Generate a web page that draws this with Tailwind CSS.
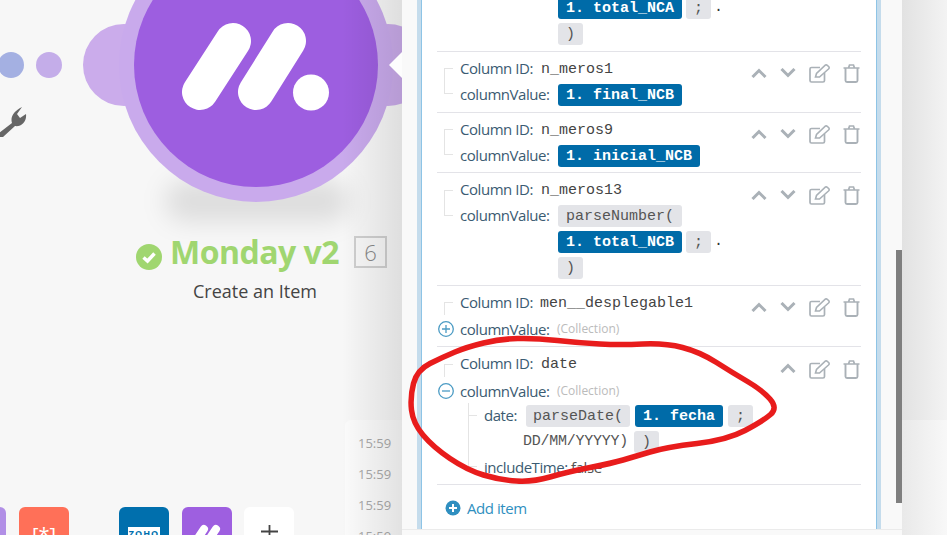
<!DOCTYPE html>
<html lang="en">
<head>
    <meta charset="UTF-8">
    <title>Monday v2</title>
    <script src="https://cdn.jsdelivr.net/npm/@tailwindcss/browser@4"></script>
</head>
<body class="w-[947px] h-[535px] overflow-hidden bg-[#f7f7f7] font-['Open_Sans',sans-serif]">
<div class="relative flex w-[947px] h-[535px] overflow-hidden">

    <!-- Scenario canvas -->
    <div class="relative w-[402px] h-[535px] shrink-0 overflow-hidden bg-[#f7f7f7]">
        <div class="absolute left-[-2px] top-[52px] w-[26px] h-[26px] rounded-full bg-[#a4b0e2]"></div>
        <div class="absolute left-[36px] top-[52px] w-[26px] h-[26px] rounded-full bg-[#c4ade9]"></div>
        <!-- wrench -->
        <svg class="absolute left-[-4px] top-[105px]" width="32" height="32" viewBox="0 0 32 32">
            <path d="M3 28 L16 18 C14 12 18 6 26 2 L21 9 L24 13 L30 9 C31 17 25 22 19 21 L7 32 L3 32 Z" fill="#666"/>
        </svg>
        <!-- module bubble -->
        <div class="absolute left-[165px] top-[180px] w-[185px] h-[42px] rounded-full bg-black/10 blur-[12px]"></div>
        <div class="absolute left-[83px] top-[24px] w-[82px] h-[82px] rounded-full bg-[#cbaceb]"></div>
        <div class="absolute left-[347px] top-[24px] w-[82px] h-[82px] rounded-full bg-[#cbaceb]"></div>
        <div class="absolute left-[119px] top-[-72px] w-[274px] h-[274px] rounded-full bg-[#c9aaec]"></div>
        <div class="absolute left-[134px] top-[-57px] w-[244px] h-[244px] rounded-full bg-[#9d5ee0]"></div>
        <svg class="absolute left-[119px] top-[0px]" width="274" height="130" viewBox="119 0 274 130">
            <path d="M233 41 L200 92 M288 41 L256 92" stroke="#fff" stroke-width="36" stroke-linecap="round" fill="none"/>
            <circle cx="311" cy="92.500" r="18" fill="#fff"/>
        </svg>
        <!-- module label -->
        <div class="absolute left-[136px] top-[233px] flex items-center h-[38px]">
            <svg class="mt-[9px] mr-[8px]" width="26" height="26" viewBox="0 0 26 26">
                <circle cx="13" cy="13" r="13" fill="#a0d670"/>
                <path d="M7.500 13.500 L11.500 17 L18.500 9.500" stroke="#fff" stroke-width="3.500" fill="none"/>
            </svg>
            <span class="text-[32px] leading-[38px] font-bold text-[#a0d670] tracking-[-0.5px]">Monday v2</span>
            <span class="ml-[15px] flex items-center justify-center w-[33px] h-[32px] border-2 border-[#cfcfcf] text-[22px] font-light text-[#888]">6</span>
        </div>
        <div class="absolute left-[193px] top-[278px] text-[18px] leading-[26px] text-[#444]">Create an Item</div>
        <!-- toolbar tiles -->
        <div class="absolute left-[-44px] top-[507px] w-[50px] h-[50px] rounded-[6px] bg-[#b18fe6]"></div>
        <div class="absolute left-[19px] top-[507px] w-[50px] h-[50px] rounded-[6px] bg-[#ff7058] flex justify-center pt-[17px] text-[20px] leading-[22px] text-white">[*]</div>
        <div class="absolute left-[119px] top-[507px] w-[50px] h-[50px] rounded-[6px] bg-[#006fad] flex justify-center pt-[20px]">
            <span class="bg-white h-[14px] px-[1px] text-[9px] leading-[13px] font-bold text-[#006fad] tracking-[1px]">ZOHO</span>
        </div>
        <div class="absolute left-[182px] top-[507px] w-[50px] h-[50px] rounded-[6px] bg-[#9e5fe0] overflow-hidden">
            <svg width="50" height="50" viewBox="0 0 50 50">
                <path d="M22 22 L10 40 M34 22 L22 40" stroke="#fff" stroke-width="8" stroke-linecap="round" fill="none"/>
            </svg>
        </div>
        <div class="absolute left-[244px] top-[507px] w-[50px] h-[50px] rounded-[6px] bg-white">
            <svg class="ml-[17px] mt-[18px]" width="17" height="17" viewBox="0 0 17 17"><path d="M0 6.500 H17 M8.500 0 V17" stroke="#444" stroke-width="1.800"/></svg>
        </div>
        <!-- log -->
        <div class="absolute left-[345px] top-[420px] w-[57px] h-[115px] rounded-tl-[6px] bg-[#fbfbfb] pl-[13px] pt-[8px] text-[13px] leading-[31px] text-[#aaa]">
            <div>15:59</div>
            <div>15:59</div>
            <div>15:59</div>
            <div>15:59</div>
        </div>
        <!-- panel shadow -->
        <div class="absolute right-0 top-0 w-[60px] h-[535px] bg-gradient-to-r from-black/0 to-black/10"></div>
        <svg class="absolute left-[388px] top-[52px]" width="14" height="26" viewBox="0 0 14 26">
            <path d="M14 0 L1 13 L14 26 Z" fill="#fdfdfd"/>
        </svg>
    </div>

    <!-- Mapper panel -->
    <div class="w-[500px] h-[535px] shrink-0 bg-[#f9f9f9] relative overflow-hidden">
        <div class="ml-[15px] w-[464px] h-[529px] bg-[#c5dcec] px-[4px] overflow-hidden">
            <div class="h-[529px] bg-white border-x border-[#8ec4e6] overflow-hidden">
            <div class="ml-[15px] w-[424px] mt-[-3px]">
                <!-- cut off row -->
                <div class="h-[55px] pl-[121px] border-b border-[#e3e3e8] font-['Liberation_Mono',monospace] text-[15px]">
                    <div class="flex gap-[4px] items-center h-[22px] mb-[4px]">
                        <span class="h-[22px] leading-[23px] px-[8px] rounded-[3px] bg-[#006ba8] text-white font-bold">1. total_NCA</span>
                        <span class="h-[22px] leading-[23px] px-[8px] rounded-[3px] bg-[#e3e4e8] text-[#555]">;</span>
                        <span class="text-[#333] ml-[-1px]">.</span>
                    </div>
                    <span class="inline-block h-[22px] leading-[23px] px-[8px] rounded-[3px] bg-[#e3e4e8] text-[#555]">)</span>
                </div>

                <!-- n_meros1 -->
                <div class="flex h-[61px] border-b border-[#e3e3e8]">
                    <div class="ml-[7px] mt-[16px] w-[9px] shrink-0">
                        <div class="h-[13px] border-l border-t border-[#e4e4e4]"></div>
                        <div class="h-[13px] border-l border-b border-[#e4e4e4]"></div>
                    </div>
                    <div class="ml-[7px] w-[291px] shrink-0 pt-[6px] text-[15px] tracking-[-0.45px] leading-[20px] text-[#3b5b72]">
                        <div class="h-[24px] flex"><span class="w-[81px]">Column ID:</span><span class="font-['Liberation_Mono',monospace] tracking-normal leading-[24px] text-[#444]">n_meros1</span></div>
                        <div class="flex items-center h-[26px]"><span class="w-[98px] pb-[2px]">columnValue:</span><span class="h-[22px] leading-[23px] px-[8px] rounded-[3px] bg-[#006ba8] text-white font-bold tracking-normal font-['Liberation_Mono',monospace]">1. final_NCB</span></div>
                    </div>
                    <div class="flex items-start gap-[13px] pt-[12px] text-[#aab1b7]">
                        <svg width="16" height="10" viewBox="0 0 16 10" class="mt-[4px]"><path d="M1.500 9 L8 2.500 L14.500 9" stroke="currentColor" stroke-width="3" fill="none"/></svg>
                        <svg width="16" height="10" viewBox="0 0 16 10" class="mt-[4px]"><path d="M1.500 1 L8 7.500 L14.500 1" stroke="currentColor" stroke-width="3" fill="none"/></svg>
                        <svg width="21" height="19" viewBox="0 0 21 19"><path d="M11 3.500 H2.500 Q1 3.500 1 5 V16.500 Q1 18 2.500 18 H14 Q15.500 18 15.500 16.500 V9" stroke="currentColor" stroke-width="1.700" fill="none"/><path d="M6.500 13 L7.500 9.500 L16.500 1 Q17.500 0.500 18.500 1.500 L20 3 Q20.500 4 19.500 5 L10.500 13 Z" stroke="currentColor" stroke-width="1.600" fill="none"/></svg>
                        <svg width="17" height="19" viewBox="0 0 17 19"><path d="M0.500 4 H16.500 M5.500 4 L6.500 1 H10.500 L11.500 4" stroke="currentColor" stroke-width="1.700" fill="none"/><path d="M2.500 4 V16.500 Q2.500 18 4 18 H13 Q14.500 18 14.500 16.500 V4" stroke="currentColor" stroke-width="1.900" fill="none"/></svg>
                    </div>
                </div>

                <!-- n_meros9 -->
                <div class="flex h-[60px] border-b border-[#e3e3e8]">
                    <div class="ml-[7px] mt-[16px] w-[9px] shrink-0">
                        <div class="h-[13px] border-l border-t border-[#e4e4e4]"></div>
                        <div class="h-[13px] border-l border-b border-[#e4e4e4]"></div>
                    </div>
                    <div class="ml-[7px] w-[291px] shrink-0 pt-[6px] text-[15px] tracking-[-0.45px] leading-[20px] text-[#3b5b72]">
                        <div class="h-[24px] flex"><span class="w-[81px]">Column ID:</span><span class="font-['Liberation_Mono',monospace] tracking-normal leading-[24px] text-[#444]">n_meros9</span></div>
                        <div class="flex items-center h-[26px]"><span class="w-[98px] pb-[2px]">columnValue:</span><span class="h-[22px] leading-[23px] px-[8px] rounded-[3px] bg-[#006ba8] text-white font-bold tracking-normal font-['Liberation_Mono',monospace]">1. inicial_NCB</span></div>
                    </div>
                    <div class="flex items-start gap-[13px] pt-[12px] text-[#aab1b7]">
                        <svg width="16" height="10" viewBox="0 0 16 10" class="mt-[4px]"><path d="M1.500 9 L8 2.500 L14.500 9" stroke="currentColor" stroke-width="3" fill="none"/></svg>
                        <svg width="16" height="10" viewBox="0 0 16 10" class="mt-[4px]"><path d="M1.500 1 L8 7.500 L14.500 1" stroke="currentColor" stroke-width="3" fill="none"/></svg>
                        <svg width="21" height="19" viewBox="0 0 21 19"><path d="M11 3.500 H2.500 Q1 3.500 1 5 V16.500 Q1 18 2.500 18 H14 Q15.500 18 15.500 16.500 V9" stroke="currentColor" stroke-width="1.700" fill="none"/><path d="M6.500 13 L7.500 9.500 L16.500 1 Q17.500 0.500 18.500 1.500 L20 3 Q20.500 4 19.500 5 L10.500 13 Z" stroke="currentColor" stroke-width="1.600" fill="none"/></svg>
                        <svg width="17" height="19" viewBox="0 0 17 19"><path d="M0.500 4 H16.500 M5.500 4 L6.500 1 H10.500 L11.500 4" stroke="currentColor" stroke-width="1.700" fill="none"/><path d="M2.500 4 V16.500 Q2.500 18 4 18 H13 Q14.500 18 14.500 16.500 V4" stroke="currentColor" stroke-width="1.900" fill="none"/></svg>
                    </div>
                </div>

                <!-- n_meros13 -->
                <div class="flex h-[113px] border-b border-[#e3e3e8]">
                    <div class="ml-[7px] mt-[17px] w-[9px] shrink-0">
                        <div class="h-[13px] border-l border-t border-[#e4e4e4]"></div>
                        <div class="h-[13px] border-l border-b border-[#e4e4e4]"></div>
                    </div>
                    <div class="ml-[7px] w-[291px] shrink-0 pt-[6px] text-[15px] tracking-[-0.45px] leading-[20px] text-[#3b5b72]">
                        <div class="h-[24px] flex"><span class="w-[81px]">Column ID:</span><span class="font-['Liberation_Mono',monospace] tracking-normal leading-[24px] text-[#444]">n_meros13</span></div>
                        <div class="flex">
                            <span class="w-[98px] h-[26px] leading-[24px]">columnValue:</span>
                            <div class="font-['Liberation_Mono',monospace] tracking-normal">
                                <div class="h-[26px] pt-[2px]"><span class="inline-block h-[22px] leading-[23px] px-[8px] rounded-[3px] bg-[#e3e4e8] text-[#555]">parseNumber(</span></div>
                                <div class="flex gap-[4px] items-center h-[26px]">
                                    <span class="h-[22px] leading-[23px] px-[8px] rounded-[3px] bg-[#006ba8] text-white font-bold">1. total_NCB</span>
                                    <span class="h-[22px] leading-[23px] px-[8px] rounded-[3px] bg-[#e3e4e8] text-[#555]">;</span>
                                    <span class="text-[#333] ml-[-1px]">.</span>
                                </div>
                                <div class="h-[26px] pt-[2px]"><span class="inline-block h-[22px] leading-[23px] px-[8px] rounded-[3px] bg-[#e3e4e8] text-[#555]">)</span></div>
                            </div>
                        </div>
                    </div>
                    <div class="flex items-start gap-[13px] pt-[13px] text-[#aab1b7]">
                        <svg width="16" height="10" viewBox="0 0 16 10" class="mt-[4px]"><path d="M1.500 9 L8 2.500 L14.500 9" stroke="currentColor" stroke-width="3" fill="none"/></svg>
                        <svg width="16" height="10" viewBox="0 0 16 10" class="mt-[4px]"><path d="M1.500 1 L8 7.500 L14.500 1" stroke="currentColor" stroke-width="3" fill="none"/></svg>
                        <svg width="21" height="19" viewBox="0 0 21 19"><path d="M11 3.500 H2.500 Q1 3.500 1 5 V16.500 Q1 18 2.500 18 H14 Q15.500 18 15.500 16.500 V9" stroke="currentColor" stroke-width="1.700" fill="none"/><path d="M6.500 13 L7.500 9.500 L16.500 1 Q17.500 0.500 18.500 1.500 L20 3 Q20.500 4 19.500 5 L10.500 13 Z" stroke="currentColor" stroke-width="1.600" fill="none"/></svg>
                        <svg width="17" height="19" viewBox="0 0 17 19"><path d="M0.500 4 H16.500 M5.500 4 L6.500 1 H10.500 L11.500 4" stroke="currentColor" stroke-width="1.700" fill="none"/><path d="M2.500 4 V16.500 Q2.500 18 4 18 H13 Q14.500 18 14.500 16.500 V4" stroke="currentColor" stroke-width="1.900" fill="none"/></svg>
                    </div>
                </div>

                <!-- men__desplegable1 -->
                <div class="flex h-[61px] border-b border-[#e3e3e8]">
                    <div class="mt-[16px] w-[16px] shrink-0 flex flex-col items-start">
                        <div class="ml-[7px] w-[9px] h-[13px] border-l border-t border-[#e4e4e4]"></div>
                        <svg class="ml-[1px] mt-[6px]" width="16" height="16" viewBox="0 0 16 16"><circle cx="8" cy="8" r="7.300" stroke="#4b9bc4" stroke-width="1.300" fill="#fff"/><path d="M4 8 H12 M8 4 V12" stroke="#4b9bc4" stroke-width="1.300"/></svg>
                    </div>
                    <div class="ml-[7px] w-[291px] shrink-0 pt-[6px] text-[15px] tracking-[-0.45px] leading-[20px] text-[#3b5b72]">
                        <div class="h-[24px] flex"><span class="w-[81px]">Column ID:</span><span class="font-['Liberation_Mono',monospace] tracking-normal leading-[24px] text-[#444] ml-[-1px]">men__desplegable1</span></div>
                        <div class="flex h-[26px] items-center"><span class="w-[97px]">columnValue:</span><span class="text-[12px] tracking-normal text-[#bbb]">(Collection)</span></div>
                    </div>
                    <div class="flex items-start gap-[13px] pt-[12px] text-[#aab1b7]">
                        <svg width="16" height="10" viewBox="0 0 16 10" class="mt-[4px]"><path d="M1.500 9 L8 2.500 L14.500 9" stroke="currentColor" stroke-width="3" fill="none"/></svg>
                        <svg width="16" height="10" viewBox="0 0 16 10" class="mt-[4px]"><path d="M1.500 1 L8 7.500 L14.500 1" stroke="currentColor" stroke-width="3" fill="none"/></svg>
                        <svg width="21" height="19" viewBox="0 0 21 19"><path d="M11 3.500 H2.500 Q1 3.500 1 5 V16.500 Q1 18 2.500 18 H14 Q15.500 18 15.500 16.500 V9" stroke="currentColor" stroke-width="1.700" fill="none"/><path d="M6.500 13 L7.500 9.500 L16.500 1 Q17.500 0.500 18.500 1.500 L20 3 Q20.500 4 19.500 5 L10.500 13 Z" stroke="currentColor" stroke-width="1.600" fill="none"/></svg>
                        <svg width="17" height="19" viewBox="0 0 17 19"><path d="M0.500 4 H16.500 M5.500 4 L6.500 1 H10.500 L11.500 4" stroke="currentColor" stroke-width="1.700" fill="none"/><path d="M2.500 4 V16.500 Q2.500 18 4 18 H13 Q14.500 18 14.500 16.500 V4" stroke="currentColor" stroke-width="1.900" fill="none"/></svg>
                    </div>
                </div>

                <!-- date -->
                <div class="flex h-[138px] border-b border-[#e3e3e8]">
                    <div class="mt-[17px] w-[16px] shrink-0 flex flex-col items-start">
                        <div class="ml-[7px] w-[9px] h-[13px] border-l border-t border-[#e4e4e4]"></div>
                        <svg class="ml-[1px] mt-[6px]" width="16" height="16" viewBox="0 0 16 16"><circle cx="8" cy="8" r="7.300" stroke="#4b9bc4" stroke-width="1.300" fill="#fff"/><path d="M4 8 H12" stroke="#4b9bc4" stroke-width="1.300"/></svg>
                    </div>
                    <div class="ml-[7px] w-[291px] shrink-0 pt-[6px] text-[15px] tracking-[-0.45px] leading-[20px] text-[#3b5b72]">
                        <div class="h-[25px] flex"><span class="w-[81px]">Column ID:</span><span class="font-['Liberation_Mono',monospace] tracking-normal leading-[24px] text-[#444]">date</span></div>
                        <div class="flex h-[26px] items-center"><span class="w-[97px]">columnValue:</span><span class="text-[12px] tracking-normal text-[#bbb]">(Collection)</span></div>
                        <div class="flex mt-[-1px] ml-[8px]">
                            <div class="flex flex-col w-[9px] mr-[7px] h-[64px] shrink-0">
                                <div class="h-[13px] border-l border-b border-[#e4e4e4]"></div>
                                <div class="h-[51px] border-l border-b border-[#e4e4e4]"></div>
                            </div>
                            <div class="shrink-0 whitespace-nowrap">
                                <div class="flex">
                                    <span class="w-[42px] h-[26px] leading-[25px]">date:</span>
                                    <div class="font-['Liberation_Mono',monospace] tracking-normal flex gap-[5px] h-[26px] items-center">
                                        <span class="h-[22px] leading-[23px] px-[7px] rounded-[3px] bg-[#e3e4e8] text-[#555]">parseDate(</span>
                                        <span class="h-[22px] leading-[23px] px-[8px] rounded-[3px] bg-[#006ba8] text-white font-bold">1. fecha</span>
                                        <span class="h-[22px] leading-[23px] px-[8px] rounded-[3px] bg-[#e3e4e8] text-[#555]">;</span>
                                    </div>
                                </div>
                                <div class="flex items-center h-[26px] ml-[39px] font-['Liberation_Mono',monospace] text-[#555] gap-[6px] tracking-[-0.25px]">
                                    <span>DD/MM/YYYYY)</span>
                                    <span class="h-[22px] leading-[23px] px-[8px] rounded-[3px] bg-[#e3e4e8] tracking-normal">)</span>
                                </div>
                                <div class="h-[26px] leading-[24px]">includeTime: <span class="text-[#555]">false</span></div>
                            </div>
                        </div>
                    </div>
                    <div class="flex items-start pt-[13px] text-[#aab1b7]">
                        <svg width="16" height="10" viewBox="0 0 16 10" class="mt-[3px] mr-[13px] ml-[29px]"><path d="M1.500 9 L8 2.500 L14.500 9" stroke="currentColor" stroke-width="3" fill="none"/></svg>
                        <svg width="21" height="19" viewBox="0 0 21 19" class="mr-[13px]"><path d="M11 3.500 H2.500 Q1 3.500 1 5 V16.500 Q1 18 2.500 18 H14 Q15.500 18 15.500 16.500 V9" stroke="currentColor" stroke-width="1.700" fill="none"/><path d="M6.500 13 L7.500 9.500 L16.500 1 Q17.500 0.500 18.500 1.500 L20 3 Q20.500 4 19.500 5 L10.500 13 Z" stroke="currentColor" stroke-width="1.600" fill="none"/></svg>
                        <svg width="17" height="19" viewBox="0 0 17 19"><path d="M0.500 4 H16.500 M5.500 4 L6.500 1 H10.500 L11.500 4" stroke="currentColor" stroke-width="1.700" fill="none"/><path d="M2.500 4 V16.500 Q2.500 18 4 18 H13 Q14.500 18 14.500 16.500 V4" stroke="currentColor" stroke-width="1.900" fill="none"/></svg>
                    </div>
                </div>

                <!-- add item -->
                <div class="flex items-center gap-[6px] pl-[8px] pt-[13px] text-[15px] tracking-[-0.45px] leading-[20px] text-[#2f8fc0]">
                    <svg width="16" height="16" viewBox="0 0 16 16"><circle cx="8" cy="8" r="7.500" fill="#2f8fc0"/><path d="M4 8 H12 M8 4 V12" stroke="#fff" stroke-width="2"/></svg>
                    <span>Add item</span>
                </div>
            </div>
            </div>
        </div>
        <div class="absolute left-[0px] top-[529px] w-[500px] h-[1px] bg-[#ebebeb]"></div>
        <!-- scrollbar -->
        <div class="absolute right-0 top-[250px] w-[6px] h-[253px] bg-[#7f7f7f]"></div>
    </div>

    <!-- Right backdrop -->
    <div class="w-[45px] h-[535px] shrink-0 flex flex-col">
        <div class="h-[420px] bg-gradient-to-r from-[#e2e2e2] to-[#f3f3f3]"></div>
        <div class="flex-1 bg-gradient-to-r from-[#e9e9e9] to-[#f8f8f8]"></div>
    </div>

    <!-- hand-drawn annotation -->
    <svg class="absolute left-0 top-0 pointer-events-none" width="947" height="535" viewBox="0 0 947 535">
        <path d="M413.500 383.500 Q417 370 430 363.500 Q443 357 455 352 Q467 347 483.500 343 Q500 339 517.500 338.500 Q535 338 557.500 340.500 Q580 343 600 344 Q620 345 642.500 344 Q665 343 682.500 347.500 Q700 352 716.500 362.500 Q733 373 747.500 381.500 Q762 390 770 399 Q778 408 770.500 414.500 Q763 421 745 430.500 Q727 440 697 443.500 Q667 447 650 452 Q633 457 623 460 Q613 463 590 467.500 Q567 472 550 477 Q533 482 516.500 481 Q500 480 483.500 475 Q467 470 450 458.500 Q433 447 423 435 Q413 423 411.500 410 Q410 397 413.500 383.500 Z" stroke="#e81c1c" stroke-width="5.500" fill="none"/>
    </svg>
</div>
</body>
</html>
